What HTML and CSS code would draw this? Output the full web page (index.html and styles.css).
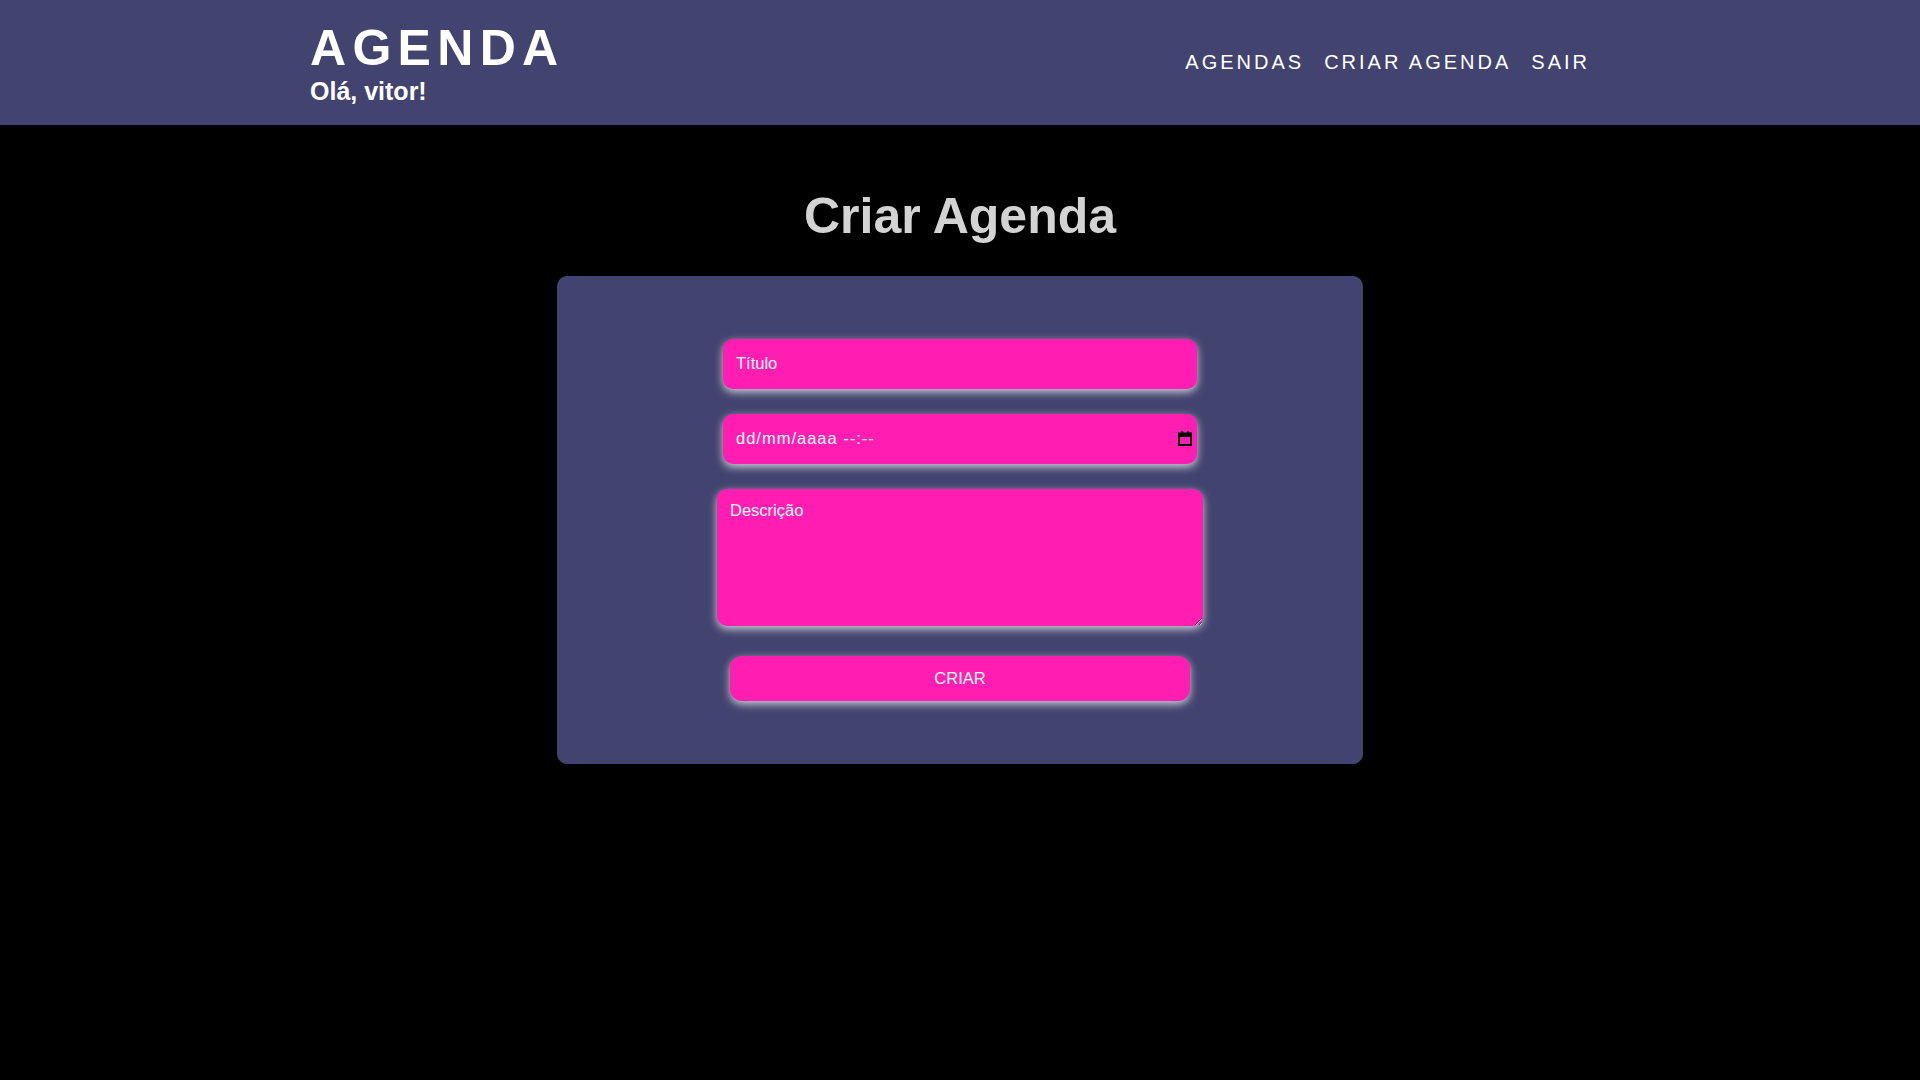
FILE: index.html
```html
<!DOCTYPE html>
<html lang="pt-BR">
<head>
<meta charset="utf-8">
<title>Criar Agenda</title>
<link rel="stylesheet" href="styles.css">
</head>
<body>
<header class="topbar">
  <div class="topbar-inner">
    <div class="brand">
      <h1 class="brand-title">AGENDA</h1>
      <p class="brand-greet">Olá, vitor!</p>
    </div>
    <nav class="nav">
      <a class="nav-link" href="#">AGENDAS</a>
      <a class="nav-link" href="#">CRIAR AGENDA</a>
      <a class="nav-link" href="#">SAIR</a>
    </nav>
  </div>
</header>
<main class="main">
  <h2 class="page-title">Criar Agenda</h2>
  <section class="card">
    <form class="form">
      <input class="field" type="text" placeholder="Título">
      <div class="date-field">
        <input class="field date" type="text" placeholder="dd/mm/aaaa --:--">
        <svg class="cal-icon" width="14" height="15" viewBox="0 0 14 15" aria-hidden="true">
          <rect x="3" y="0" width="2" height="3" fill="#000"/>
          <rect x="9" y="0" width="2" height="3" fill="#000"/>
          <rect x="0" y="2" width="14" height="4" fill="#000"/>
          <rect x="1" y="2.5" width="12" height="11.5" fill="none" stroke="#000" stroke-width="2"/>
        </svg>
      </div>
      <textarea class="field area" placeholder="Descrição"></textarea>
      <button class="btn" type="button">CRIAR</button>
    </form>
  </section>
</main>
</body>
</html>
```
FILE: styles.css
```css
* { box-sizing: border-box; }
html, body { margin: 0; padding: 0; }
body {
  background: #000;
  font-family: "Liberation Sans", Arial, sans-serif;
  color: #fff;
  min-height: 1080px;
}
.topbar {
  background: #43436f;
  height: 125px;
}
.topbar-inner {
  width: 1300px;
  margin: 0 auto;
  height: 100%;
  display: flex;
  align-items: center;
  justify-content: space-between;
}
.brand { display: flex; flex-direction: column; }
.brand-title {
  margin: 0;
  font-size: 50px;
  line-height: 58px;
  font-weight: 700;
  letter-spacing: 6.3px;
  color: #fff;
}
.brand-greet {
  margin: 0 0 2px;
  font-size: 25px;
  font-weight: 700;
  line-height: 28px;
  color: #fff;
}
.nav { display: flex; margin-right: 10px; }
.nav-link {
  color: #fff;
  text-decoration: none;
  font-size: 20px;
  letter-spacing: 3px;
  padding: 0 10px;
}
.main { display: flex; flex-direction: column; align-items: center; }
.page-title {
  margin: 64px 0 32px;
  font-size: 50px;
  font-weight: 700;
  color: #d3d3d3;
  line-height: 55px;
}
.card {
  width: 806px;
  background: #43436f;
  border-radius: 10px;
  padding: 63px 0;
}
.form {
  display: flex;
  flex-direction: column;
  align-items: center;
}
.field {
  display: block;
  width: 474px;
  height: 50px;
  border: none;
  outline: none;
  border-radius: 10px;
  background: #ff1eb1;
  color: #fff;
  font-family: "Liberation Sans", Arial, sans-serif;
  font-size: 16.5px;
  padding: 0 13px 1px;
  box-shadow: 0 3px 8px rgba(255, 255, 255, 0.75);
}
.field::placeholder { color: #fff; opacity: 1; }
.date { letter-spacing: 1px; }
.date-field {
  position: relative;
  margin-top: 25px;
}
.cal-icon {
  position: absolute;
  right: 5px;
  top: 17px;
}
.area {
  margin-top: 25px;
  width: 486px;
  height: 137px;
  padding: 12px 13px;
  resize: vertical;
}
.btn {
  margin-top: 30px;
  width: 460px;
  height: 45px;
  border: none;
  border-radius: 12px;
  background: #ff1eb1;
  color: #fff;
  font-family: "Liberation Sans", Arial, sans-serif;
  font-size: 16.5px;
  box-shadow: 0 3px 8px rgba(255, 255, 255, 0.75);
  cursor: pointer;
}
```
